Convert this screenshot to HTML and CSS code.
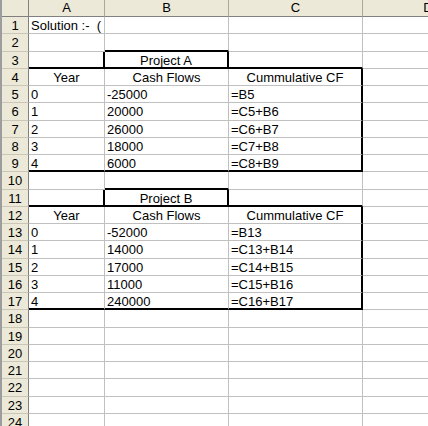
FILE: index.html
```html
<!doctype html>
<html>
<head>
	<meta charset="utf-8">
	<title>Payback - Cash Flows</title>
	<link rel="stylesheet" href="styles.css">
</head>
<body>

	<div class="sheet">

		<div class="row head">
			<div class="corner"></div>
			<div class="ch">A</div>
			<div class="ch">B</div>
			<div class="ch">C</div>
			<div class="ch">D</div>
		</div>

		<div class="row"><div class="rh">1</div><div class="c">Solution :-&nbsp;&nbsp;(</div><div class="c"></div><div class="c"></div><div class="c"></div></div>
		<div class="row"><div class="rh">2</div><div class="c"></div><div class="c bb"></div><div class="c"></div><div class="c"></div></div>
		<div class="row"><div class="rh">3</div><div class="c bb br"></div><div class="c mid bb br">Project A</div><div class="c bb"></div><div class="c"></div></div>
		<div class="row"><div class="rh">4</div><div class="c mid">Year</div><div class="c mid">Cash Flows</div><div class="c mid br">Cummulative CF</div><div class="c"></div></div>
		<div class="row"><div class="rh">5</div><div class="c">0</div><div class="c">-25000</div><div class="c br">=B5</div><div class="c"></div></div>
		<div class="row"><div class="rh">6</div><div class="c">1</div><div class="c">20000</div><div class="c br">=C5+B6</div><div class="c"></div></div>
		<div class="row"><div class="rh">7</div><div class="c">2</div><div class="c">26000</div><div class="c br">=C6+B7</div><div class="c"></div></div>
		<div class="row"><div class="rh">8</div><div class="c">3</div><div class="c">18000</div><div class="c br">=C7+B8</div><div class="c"></div></div>
		<div class="row"><div class="rh">9</div><div class="c bb">4</div><div class="c bb">6000</div><div class="c bb br">=C8+B9</div><div class="c"></div></div>
		<div class="row"><div class="rh">10</div><div class="c"></div><div class="c bb"></div><div class="c"></div><div class="c"></div></div>
		<div class="row"><div class="rh">11</div><div class="c bb br"></div><div class="c mid bb br">Project B</div><div class="c bb"></div><div class="c"></div></div>
		<div class="row"><div class="rh">12</div><div class="c mid">Year</div><div class="c mid">Cash Flows</div><div class="c mid br">Cummulative CF</div><div class="c"></div></div>
		<div class="row"><div class="rh">13</div><div class="c">0</div><div class="c">-52000</div><div class="c br">=B13</div><div class="c"></div></div>
		<div class="row"><div class="rh">14</div><div class="c">1</div><div class="c">14000</div><div class="c br">=C13+B14</div><div class="c"></div></div>
		<div class="row"><div class="rh">15</div><div class="c">2</div><div class="c">17000</div><div class="c br">=C14+B15</div><div class="c"></div></div>
		<div class="row"><div class="rh">16</div><div class="c">3</div><div class="c">11000</div><div class="c br">=C15+B16</div><div class="c"></div></div>
		<div class="row"><div class="rh">17</div><div class="c bb">4</div><div class="c bb">240000</div><div class="c bb br">=C16+B17</div><div class="c"></div></div>
		<div class="row"><div class="rh">18</div><div class="c"></div><div class="c"></div><div class="c"></div><div class="c"></div></div>
		<div class="row"><div class="rh">19</div><div class="c"></div><div class="c"></div><div class="c"></div><div class="c"></div></div>
		<div class="row"><div class="rh">20</div><div class="c"></div><div class="c"></div><div class="c"></div><div class="c"></div></div>
		<div class="row"><div class="rh">21</div><div class="c"></div><div class="c"></div><div class="c"></div><div class="c"></div></div>
		<div class="row"><div class="rh">22</div><div class="c"></div><div class="c"></div><div class="c"></div><div class="c"></div></div>
		<div class="row"><div class="rh">23</div><div class="c"></div><div class="c"></div><div class="c"></div><div class="c"></div></div>
		<div class="row"><div class="rh">24</div><div class="c"></div><div class="c"></div><div class="c"></div><div class="c"></div></div>

	</div><!-- /sheet -->

</body>
</html>
```

FILE: styles.css
```css
body{
	margin: 0;
	padding: 0;
	background: #fff;
	font-family: "Liberation Sans", Arial, sans-serif;
	font-size: 13px;
	color: #000;
	overflow: hidden;
}
.sheet{
	width: 500px;
	border-left: 2px solid #9d9d9d;
}
.row{
	display: grid;
	grid-template-columns: 27px 76px 124px 134px 131px;
	height: 17.26px;
}
.row.head{
	height: 17px;
}
.row > div{
	box-sizing: border-box;
	overflow: hidden;
	white-space: nowrap;
	line-height: 16px;
}
.corner,.ch{
	background: #ece9d8;
	border-right: 1px solid #aca899;
	border-bottom: 1px solid #808080;
	text-align: center;
}
.corner{
	border-right-color: #808080;
}
.rh{
	background: #ece9d8;
	border-right: 1px solid #808080;
	border-bottom: 1px solid #cbc7b8;
	text-align: center;
	padding-top: 1px;
}
.c{
	border-right: 1px solid #c0c0c0;
	border-bottom: 1px solid #c0c0c0;
	padding: 1px 2px 0 2px;
}
.c.mid{
	text-align: center;
}
.c.bb{
	border-bottom: 2px solid #000;
}
.c.br{
	border-right: 2px solid #000;
}
```
